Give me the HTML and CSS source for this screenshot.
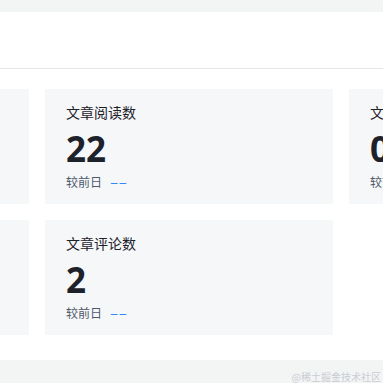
FILE: index.html
```html
<!DOCTYPE html>
<html lang="zh-CN">
<head>
    <meta charset="UTF-8">
    <meta name="viewport" content="width=device-width, initial-scale=1.0">
    <title>数据概览</title>
    <link rel="stylesheet" href="styles.css">
</head>
<body>

    <!-- Panel -->
    <div class="panel">
        <div class="panel-head"></div>

        <!-- Stat cards -->
        <div class="stats">
            <div class="card">
                <div class="card-title">文章展现数</div>
                <div class="card-num">0</div>
                <div class="card-foot">较前日 <span class="trend">––</span></div>
            </div>
            <div class="card">
                <div class="card-title">文章阅读数</div>
                <div class="card-num">22</div>
                <div class="card-foot">较前日 <span class="trend">––</span></div>
            </div>
            <div class="card">
                <div class="card-title">文章点赞数</div>
                <div class="card-num">0</div>
                <div class="card-foot">较前日 <span class="trend">––</span></div>
            </div>
            <div class="card">
                <div class="card-title">文章收藏数</div>
                <div class="card-num">0</div>
                <div class="card-foot">较前日 <span class="trend">––</span></div>
            </div>
            <div class="card">
                <div class="card-title">文章评论数</div>
                <div class="card-num">2</div>
                <div class="card-foot">较前日 <span class="trend">––</span></div>
            </div>
        </div>
    </div>

    <div class="footer">
        <span class="watermark">@稀土掘金技术社区</span>
    </div>

</body>
</html>
```

FILE: styles.css
```css
body {
    margin: 0;
    padding: 12px 0 0;
    background-color: #f3f4f4;
    font-family: "Noto Sans CJK SC", "Noto Sans", sans-serif;
    color: #1d2129;
    overflow: hidden;
}

.panel {
    background-color: white;
    padding-bottom: 25px;
}

.panel-head {
    height: 56px;
    border-bottom: 1px solid #e4e6eb;
}

/* Stat cards grid, shifted left: first column is cut off */
.stats {
    display: grid;
    grid-template-columns: repeat(3, 288px);
    gap: 16px;
    margin-left: -259px;
    padding-top: 20px;
}

.card {
    background-color: #f6f7f9;
    height: 115px;
    padding: 14px 21px 0;
    box-sizing: border-box;
}

.card-title {
    font-size: 14px;
    line-height: 18px;
    color: #1d2129;
}

.card-num {
    font-family: "Noto Sans", sans-serif;
    font-weight: bold;
    font-size: 35px;
    line-height: 40px;
    margin-top: 8px;
}

.card-foot {
    font-size: 12px;
    line-height: 18px;
    color: #4e5969;
    margin-top: 4px;
}

.card-foot .trend {
    font-family: "Liberation Sans", sans-serif;
    color: #1e80ff;
    margin-left: 6px;
    letter-spacing: 2px;
}

.footer {
    height: 40px;
    position: relative;
}

.watermark {
    position: absolute;
    right: 2px;
    top: 9px;
    font-size: 10px;
    color: #c9cdd4;
}
```
